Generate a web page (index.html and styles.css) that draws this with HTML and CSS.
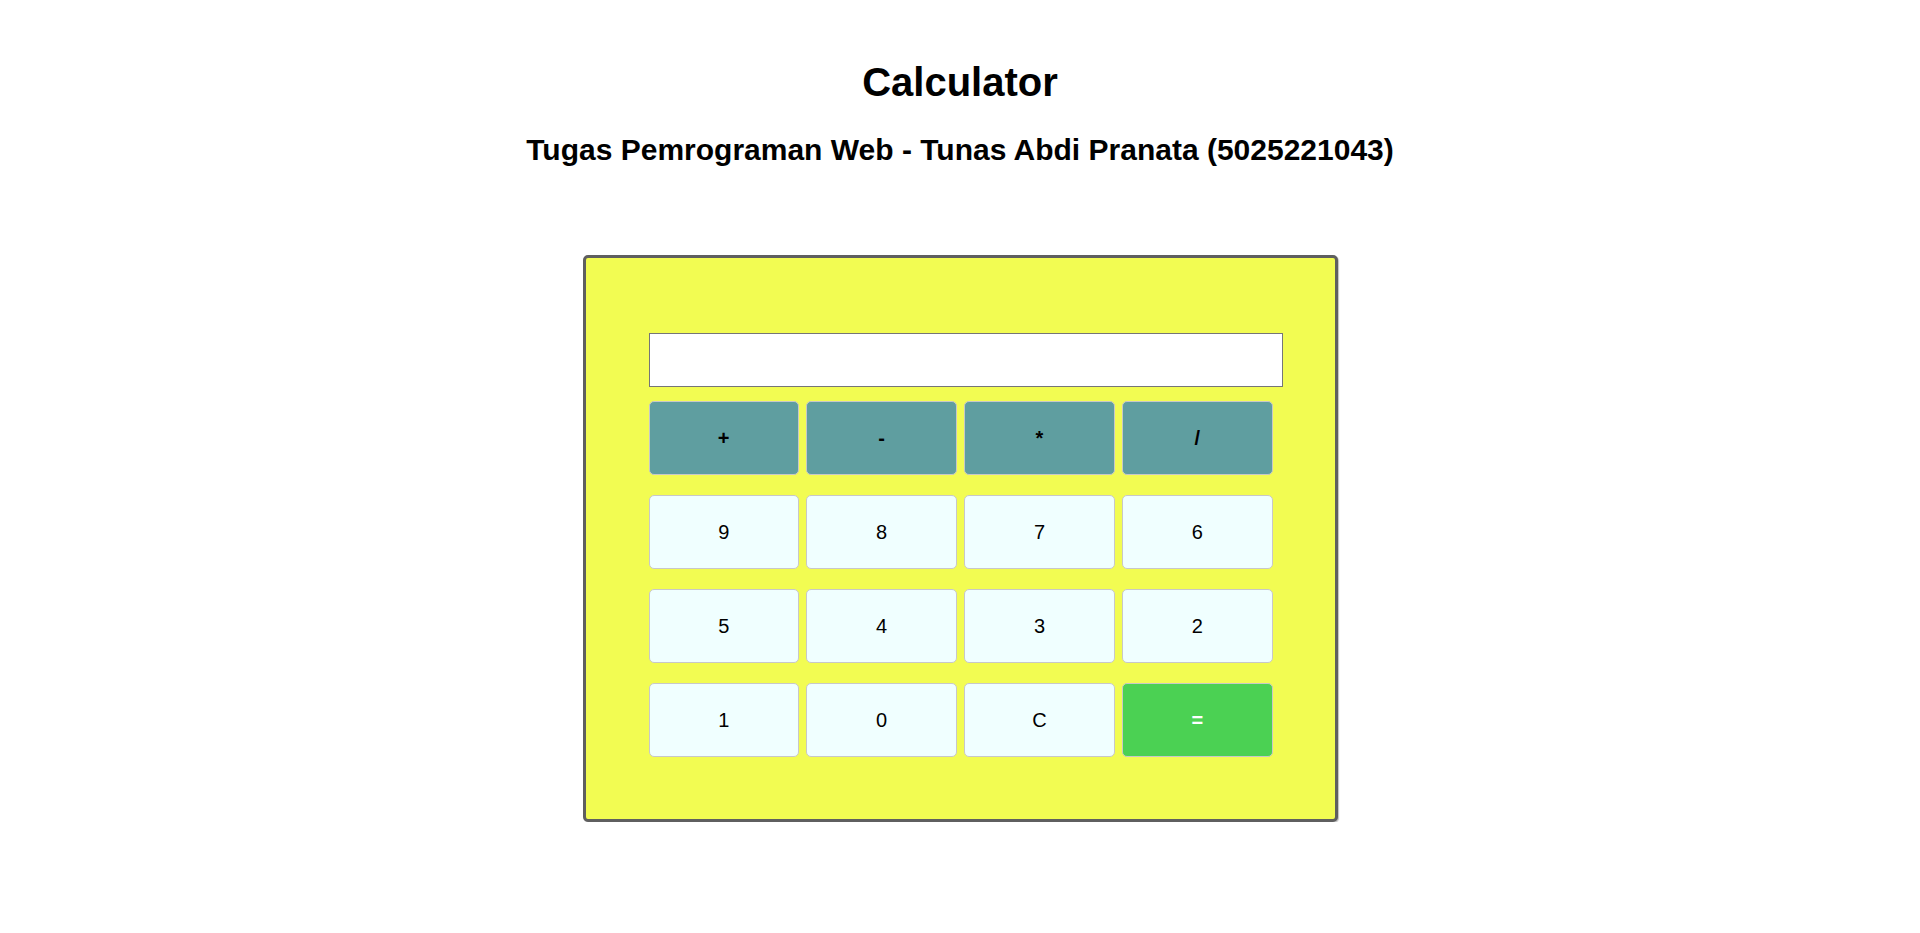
FILE: index.html
```html
<!DOCTYPE html>
<html lang="en">
<head>
<meta charset="utf-8">
<title>Calculator</title>
<link rel="stylesheet" href="styles.css">
</head>
<body>
<h1 class="title">Calculator</h1>
<h2 class="subtitle">Tugas Pemrograman Web - Tunas Abdi Pranata (5025221043)</h2>
<div class="calc">
  <input class="display" type="text">
  <div class="keys">
    <button class="key op">+</button>
    <button class="key op">-</button>
    <button class="key op">*</button>
    <button class="key op">/</button>
    <button class="key num">9</button>
    <button class="key num">8</button>
    <button class="key num">7</button>
    <button class="key num">6</button>
    <button class="key num">5</button>
    <button class="key num">4</button>
    <button class="key num">3</button>
    <button class="key num">2</button>
    <button class="key num">1</button>
    <button class="key num">0</button>
    <button class="key num">C</button>
    <button class="key eq">=</button>
  </div>
</div>
</body>
</html>
```

FILE: styles.css
```css
html, body {
  margin: 0;
  padding: 0;
  background: #ffffff;
}
body {
  font-family: "Liberation Sans", Arial, sans-serif;
  color: #000;
}
.title {
  margin: 60px 0 0;
  text-align: center;
  font-size: 40px;
  font-weight: bold;
}
.subtitle {
  margin: 28px 0 0;
  text-align: center;
  font-size: 30px;
  font-weight: bold;
}
.calc {
  box-sizing: border-box;
  width: 755px;
  margin: 88px auto 0;
  padding: 75px 52px 62px 63px;
  background: #f2fc52;
  border: 3px solid #5f5f5f;
  border-radius: 5px;
  box-shadow: 1px 1px 1px rgba(0,0,0,0.25);
}
.display {
  display: block;
  box-sizing: border-box;
  width: 634px;
  height: 54px;
  margin: 0;
  padding: 0 6px;
  border: 1px solid #767676;
  border-radius: 0;
  background: #fff;
  font-size: 20px;
  font-family: "Liberation Sans", Arial, sans-serif;
}
.keys {
  margin-top: 14px;
  width: 624px;
  display: grid;
  grid-template-columns: repeat(4, 1fr);
  column-gap: 7.5px;
  row-gap: 20px;
}
.key {
  height: 74px;
  margin: 0;
  padding: 0;
  border: 1px solid #c8c8c8;
  border-radius: 5px;
  font-family: "Liberation Sans", Arial, sans-serif;
  font-size: 20px;
  color: #000;
  cursor: pointer;
}
.op {
  background: #5f9ea0;
  font-weight: bold;
}
.num {
  background: #f0ffff;
}
.eq {
  background: #4bd153;
  color: #fff;
  font-weight: bold;
}
```
